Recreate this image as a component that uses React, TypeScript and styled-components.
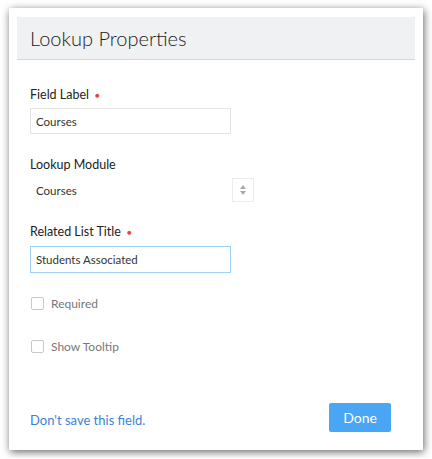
import styled, { createGlobalStyle } from 'styled-components';

const GlobalStyle = createGlobalStyle`
  html, body {
    margin: 0;
    padding: 0;
    background: #ffffff;
  }
  body {
    font-family: Lato, "Open Sans", sans-serif;
    color: #333;
  }
`;

const Page = styled.div`
  padding: 8px 9px;
`;

const Card = styled.div`
  width: 414px;
  height: 442px;
  box-sizing: border-box;
  background: #fff;
  box-shadow: 1px 2px 8px rgba(0, 0, 0, 0.6);
  display: flex;
  flex-direction: column;
`;

const Header = styled.div`
  margin: 9px 8px 0 8px;
  height: 43px;
  box-sizing: border-box;
  background: #f0f1f3;
  border-bottom: 1px solid #d6d6d6;
  display: flex;
  align-items: center;
  padding-left: 13px;
`;

const Title = styled.h1`
  margin: 0;
  font-size: 20px;
  font-weight: 300;
  color: #1a1a1a;
`;

const Body = styled.div`
  padding: 0 21px;
  display: flex;
  flex-direction: column;
`;

const Label = styled.div<{ $top: number }>`
  margin-top: ${(p) => p.$top}px;
  font-size: 12.5px;
  line-height: 16px;
  color: #222;
`;

const Star = styled.span`
  color: #e8473d;
  margin-left: 6px;
  font-size: 8px;
  vertical-align: 1px;
`;

const TextInput = styled.div<{ $focus?: boolean }>`
  margin-top: 5px;
  width: 201px;
  height: 26px;
  box-sizing: border-box;
  border: 1px solid ${(p) => (p.$focus ? '#9fd0f6' : '#e3e3e3')};
  padding: 0 5px;
  display: flex;
  align-items: center;
  font-size: 11.5px;
  color: #333;
`;

const Select = styled.div`
  margin-top: 5px;
  width: 224px;
  height: 24px;
  display: flex;
  align-items: stretch;
`;

const SelectValue = styled.div`
  flex: 1;
  padding-left: 6px;
  display: flex;
  align-items: center;
  font-size: 11.5px;
  color: #333;
`;

const SelectArrow = styled.div`
  width: 22px;
  box-sizing: border-box;
  border: 1px solid #ececec;
  display: flex;
  align-items: center;
  justify-content: center;
`;

const CheckRow = styled.label<{ $top: number }>`
  margin-top: ${(p) => p.$top}px;
  display: flex;
  align-items: center;
  gap: 7px;
  font-size: 12px;
  color: #777;
  height: 14px;
`;

const Box = styled.span`
  width: 13px;
  height: 13px;
  margin-left: 1px;
  box-sizing: border-box;
  border: 1px solid #c8c8c8;
  border-radius: 2px;
  background: #fff;
`;

const Footer = styled.div`
  margin-top: auto;
  padding: 0 32px 18px 21px;
  display: flex;
  justify-content: space-between;
  align-items: flex-end;
`;

const Link = styled.a`
  font-size: 13px;
  line-height: 16px;
  color: #3a82d6;
  margin-bottom: 4px;
  text-decoration: none;
`;

const DoneButton = styled.button`
  width: 62px;
  height: 29px;
  border: none;
  border-radius: 2px;
  background: #4aa5f4;
  color: #fff;
  font-family: inherit;
  font-size: 14px;
  padding: 0;
`;

export default function App(): JSX.Element {
  return (
    <Page>
      <GlobalStyle />
      <Card>
        <Header>
          <Title>Lookup Properties</Title>
        </Header>
        <Body>
          <Label $top={27}>
            Field Label<Star>●</Star>
          </Label>
          <TextInput>Courses</TextInput>

          <Label $top={23}>Lookup Module</Label>
          <Select>
            <SelectValue>Courses</SelectValue>
            <SelectArrow>
              <svg width="8" height="12" viewBox="0 0 8 12">
                <path d="M4 1 L7 5 L1 5 Z" fill="#a8a8a8" />
                <path d="M4 11 L7 7 L1 7 Z" fill="#a8a8a8" />
              </svg>
            </SelectArrow>
          </Select>

          <Label $top={22}>
            Related List Title<Star>●</Star>
          </Label>
          <TextInput $focus style={{ marginTop: 6, height: 27 }}>
            Students Associated
          </TextInput>

          <CheckRow $top={23}>
            <Box />
            Required
          </CheckRow>
          <CheckRow $top={29}>
            <Box />
            Show Tooltip
          </CheckRow>
        </Body>
        <Footer>
          <Link href="#">Don't save this field.</Link>
          <DoneButton>Done</DoneButton>
        </Footer>
      </Card>
    </Page>
  );
}
